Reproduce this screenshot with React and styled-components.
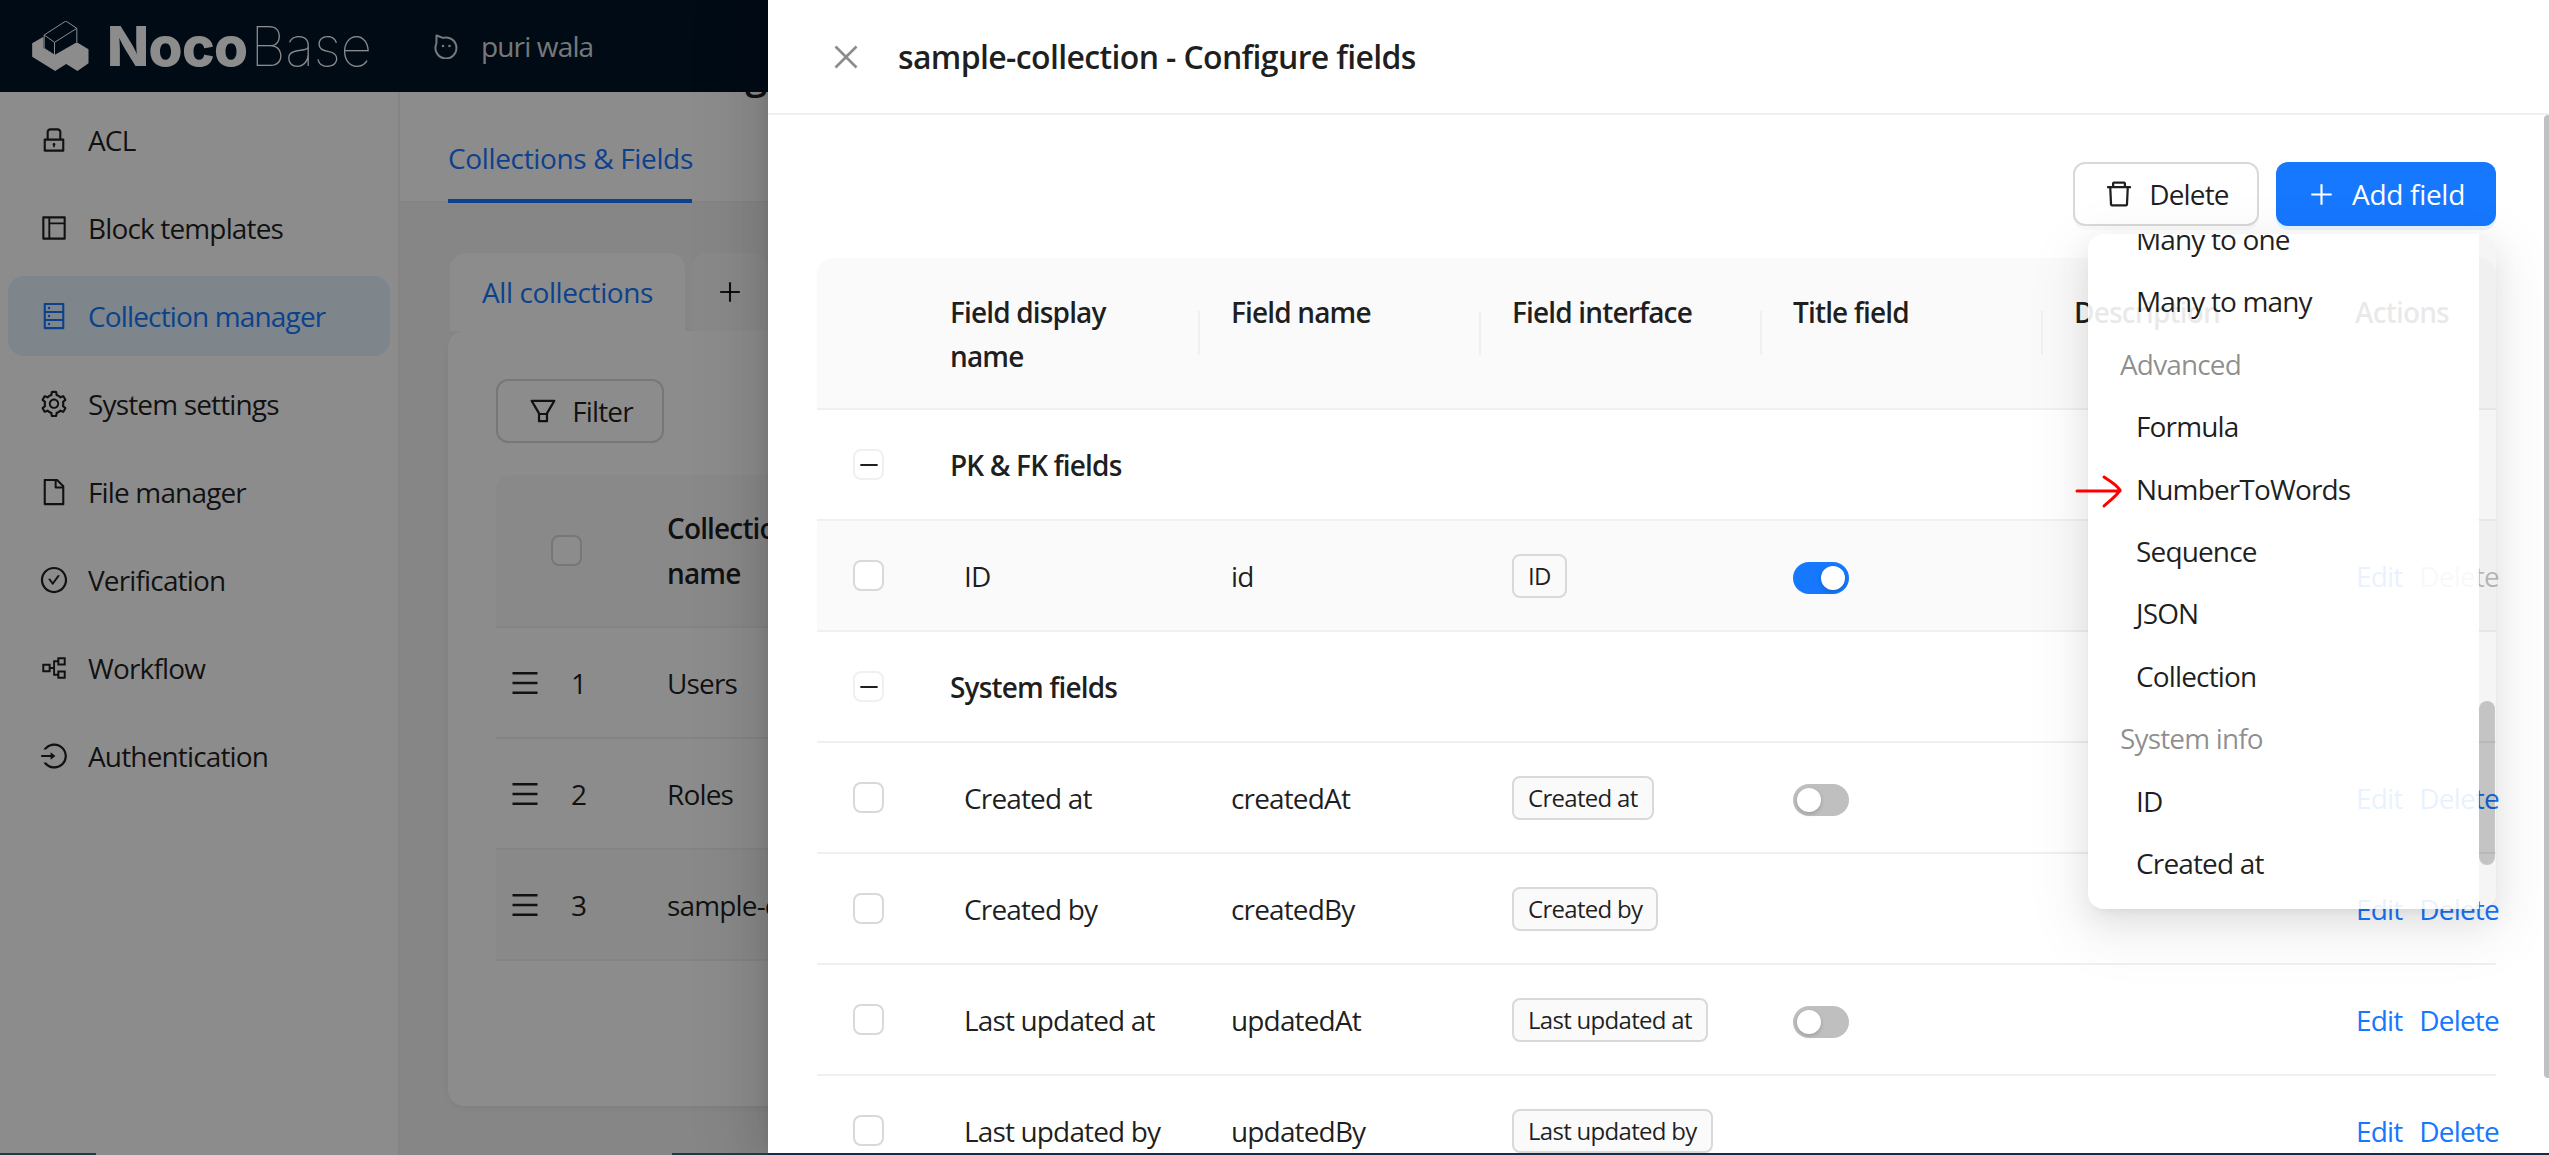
import styled, { createGlobalStyle } from "styled-components";
import {
  AiOutlineLock,
  AiOutlineLayout,
  AiOutlineDatabase,
  AiOutlineSetting,
  AiOutlineFile,
  AiOutlineCheckCircle,
  AiOutlinePartition,
  AiOutlineLogin,
  AiOutlineDelete,
  AiOutlinePlus,
  AiOutlineClose,
  AiOutlineFilter,
  AiOutlineMenu,
  AiOutlineMinus,
} from "react-icons/ai";

const GlobalStyle = createGlobalStyle`
  html, body {
    margin: 0;
    padding: 0;
    width: 2549px;
    height: 1155px;
    overflow: hidden;
    background: #fff;
  }
  * { box-sizing: border-box; }
`;

const Page = styled.div`
  position: relative;
  width: 2549px;
  height: 1155px;
  overflow: hidden;
  display: flex;
  flex-direction: column;
  font-family: "Open Sans", "Noto Sans", sans-serif;
  font-size: 28px;
  letter-spacing: -0.85px;
  color: rgba(0, 0, 0, 0.88);
  background: #f5f5f5;
`;

/* ---- app header ---- */

const Header = styled.header`
  flex: none;
  height: 92px;
  display: flex;
  align-items: center;
  padding-left: 32px;
  background: #001529;
  color: rgba(255, 255, 255, 0.85);
`;

const LogoMark = styled.svg`
  width: 57px;
  height: 50px;
  margin-right: 18px;
`;

const LogoText = styled.div`
  display: flex;
  align-items: baseline;
  font-family: Inter, "Liberation Sans", sans-serif;
  font-size: 55px;
  line-height: 1;
  color: #fff;
  width: 327px;
`;

const LogoBold = styled.span`
  font-weight: 800;
  letter-spacing: -0.6px;
  margin-right: 3px;
`;

const LogoThin = styled.span`
  font-weight: 100;
  letter-spacing: -0.4px;
`;

const AppName = styled.div`
  display: flex;
  align-items: center;
  gap: 23px;
`;

const AppIcon = styled.svg`
  width: 24px;
  height: 25px;
`;

/* ---- page behind the drawer ---- */

const Body = styled.div`
  flex: 1;
  min-height: 0;
  display: flex;
`;

const Sidebar = styled.nav`
  flex: none;
  width: 400px;
  padding: 8px 8px 0;
  background: #fff;
  border-right: 2px solid #f0f0f0;
`;

const MenuItem = styled.div`
  height: 80px;
  margin-bottom: 8px;
  padding-left: 31px;
  display: flex;
  align-items: center;
  gap: 19px;
  border-radius: 16px;
  background: ${(p) => (p.$active ? "#e6f4ff" : "transparent")};
  color: ${(p) => (p.$active ? "#1677ff" : "rgba(0, 0, 0, 0.88)")};

  svg {
    flex: none;
    font-size: 30px;
  }
`;

const Main = styled.main`
  flex: 1;
  min-width: 0;
`;

const PageHead = styled.div`
  height: 111px;
  padding-left: 48px;
  display: flex;
  flex-direction: column;
  justify-content: flex-end;
  overflow: hidden;
  background: #fff;
  box-shadow: inset 0 -2px 0 #f0f0f0;
`;

const PageTitle = styled.h1`
  flex: none;
  margin: 0 0 12px;
  font-size: 40px;
  line-height: 56px;
  font-weight: 600;
  letter-spacing: -1px;
  white-space: nowrap;
`;

const PageTab = styled.div`
  flex: none;
  align-self: flex-start;
  height: 90px;
  width: 244px;
  padding-top: 4px;
  display: flex;
  align-items: center;
  white-space: nowrap;
  letter-spacing: -0.35px;
  color: #1677ff;
  border-bottom: 4px solid #1677ff;
`;

const Content = styled.div`
  padding: 50px 50px 0 48px;
`;

const CardTabs = styled.div`
  display: flex;
  gap: 7px;
  height: 78px;
  padding-left: 2px;
`;

const CardTab = styled.div`
  display: flex;
  align-items: center;
  justify-content: center;
  width: ${(p) => (p.$add ? "76px" : "235px")};
  letter-spacing: -0.4px;
  border-radius: 16px 16px 0 0;
  background: ${(p) => (p.$add ? "#fafafa" : "#fff")};
  color: ${(p) => (p.$add ? "rgba(0, 0, 0, 0.88)" : "#1677ff")};
`;

const Card = styled.div`
  height: 775px;
  padding: 48px;
  background: #fff;
  border-radius: 16px;
  box-shadow: 0 2px 4px rgba(0, 0, 0, 0.03), 0 2px 12px rgba(0, 0, 0, 0.04);
`;

const FilterButton = styled.div`
  width: 168px;
  height: 64px;
  display: flex;
  align-items: center;
  justify-content: center;
  gap: 13px;
  background: #fff;
  border: 2px solid #d9d9d9;
  border-radius: 12px;

  svg {
    font-size: 32px;
  }
`;

const CollectionHead = styled.div`
  margin-top: 32px;
  height: 153px;
  display: flex;
  align-items: center;
  background: #fafafa;
  border-radius: 16px 16px 0 0;
  border-bottom: 2px solid #f0f0f0;
  font-weight: 600;
  line-height: 45px;
`;

const HeadCheckCell = styled.div`
  flex: none;
  width: 171px;
  padding-left: 55px;
`;

const HeadName = styled.div`
  white-space: nowrap;
`;

const CollectionRow = styled.div`
  height: 111px;
  display: flex;
  align-items: center;
  background: ${(p) => (p.$hover ? "#fafafa" : "#fff")};
  border-bottom: 2px solid #f0f0f0;
`;

const HandleCell = styled.div`
  flex: none;
  width: 171px;
  padding-left: 13px;
  display: flex;
  align-items: center;
  gap: 30px;

  svg {
    font-size: 32px;
  }
`;

/* ---- overlay ---- */

const Mask = styled.div`
  position: absolute;
  inset: 0;
  background: rgba(0, 0, 0, 0.45);
`;

const Drawer = styled.aside`
  position: absolute;
  top: 0;
  right: 0;
  bottom: 0;
  width: 1781px;
  display: flex;
  flex-direction: column;
  background: #fff;
  box-shadow: -12px 0 32px 0 rgba(0, 0, 0, 0.08), -6px 0 12px -8px rgba(0, 0, 0, 0.12),
    -18px 0 56px 16px rgba(0, 0, 0, 0.05);
`;

const DrawerHead = styled.div`
  flex: none;
  height: 115px;
  display: flex;
  align-items: center;
  gap: 35px;
  padding-left: 61px;
  border-bottom: 2px solid #f0f0f0;

  svg {
    font-size: 34px;
    color: rgba(0, 0, 0, 0.45);
  }
`;

const DrawerTitle = styled.div`
  font-size: 32px;
  font-weight: 600;
  letter-spacing: -0.64px;
`;

const DrawerBody = styled.div`
  flex: 1;
  min-height: 0;
  overflow: hidden;
  padding: 47px 53px 0 49px;
`;

const Actions = styled.div`
  display: flex;
  justify-content: flex-end;
  gap: 17px;
  margin-bottom: 32px;
`;

const Button = styled.div`
  height: 64px;
  width: ${(p) => p.$width}px;
  display: flex;
  align-items: center;
  justify-content: center;
  gap: ${(p) => (p.$primary ? 16 : 14)}px;
  border-radius: 12px;
  letter-spacing: ${(p) => (p.$primary ? "-0.3px" : "-0.85px")};
  background: ${(p) => (p.$primary ? "#1677ff" : "#fff")};
  color: ${(p) => (p.$primary ? "#fff" : "rgba(0, 0, 0, 0.88)")};
  border: ${(p) => (p.$primary ? "none" : "2px solid #d9d9d9")};
  box-shadow: ${(p) =>
    p.$primary ? "0 4px 0 rgba(5, 145, 255, 0.1)" : "0 4px 0 rgba(0, 0, 0, 0.02)"};

  svg {
    font-size: ${(p) => (p.$primary ? 29 : 32)}px;
  }
`;

const Row = styled.div`
  display: grid;
  grid-template-columns: 102px repeat(5, 281px) 1fr;
  align-items: center;
  height: ${(p) => p.$height || 111}px;
  background: ${(p) => (p.$shaded ? "#fafafa" : "#fff")};
  border-bottom: 2px solid #f0f0f0;
`;

const HeadRow = styled(Row)`
  height: 152px;
  background: #fafafa;
  border-radius: 16px 16px 0 0;
  font-weight: 600;
  line-height: 44px;
`;

const HeadCell = styled.div`
  position: relative;
  padding: 0 31px;

  &:not(:last-child)::after {
    content: "";
    position: absolute;
    top: 50%;
    right: 0;
    width: 2px;
    height: 44px;
    margin-top: -22px;
    background: #f0f0f0;
  }
`;

const HeadText = styled.div`
  height: 88px;
  padding-top: 1px;
`;

const Cell = styled.div`
  padding: 0 31px;
  white-space: nowrap;
`;

const TextCell = styled(Cell)`
  padding-left: ${(p) => (p.$indent ? 45 : 31)}px;
`;

const GroupTitle = styled(Cell)`
  grid-column: 2 / -1;
  font-weight: 600;
`;

const CheckCell = styled.div`
  padding-left: 36px;
`;

const Checkbox = styled.div`
  width: 31px;
  height: 31px;
  display: flex;
  align-items: center;
  justify-content: center;
  background: #fff;
  border: 2px solid ${(p) => (p.$light ? "#f0f0f0" : "#d9d9d9")};
  border-radius: 8px;
  color: rgba(0, 0, 0, 0.88);

  svg {
    font-size: 24px;
  }
`;

const Tag = styled.span`
  display: inline-block;
  height: 44px;
  line-height: 40px;
  padding: 0 14px;
  font-size: 24px;
  letter-spacing: -0.7px;
  background: #fafafa;
  border: 2px solid #d9d9d9;
  border-radius: 8px;
`;

const Switch = styled.div`
  width: 56px;
  height: 32px;
  margin-top: 4px;
  padding: 4px;
  display: flex;
  justify-content: ${(p) => (p.$on ? "flex-end" : "flex-start")};
  border-radius: 16px;
  background: ${(p) => (p.$on ? "#1677ff" : "#bfbfbf")};

  &::after {
    content: "";
    width: 24px;
    height: 24px;
    border-radius: 50%;
    background: #fff;
    box-shadow: 0 2px 4px rgba(0, 35, 11, 0.2);
  }
`;

const RowActions = styled.div`
  padding-left: 32px;
  display: flex;
  gap: 17px;
  white-space: nowrap;
`;

const ActionLink = styled.span`
  color: ${(p) => (p.$disabled ? "rgba(0, 0, 0, 0.25)" : "#1677ff")};
`;

/* ---- field type dropdown, open and scrolled ---- */

const Dropdown = styled.div`
  position: absolute;
  left: 1320px;
  top: 234px;
  width: 408px;
  height: 675px;
  display: flex;
  overflow: hidden;
  border-radius: 16px;
  box-shadow: 0 12px 32px 0 rgba(0, 0, 0, 0.08), 0 6px 12px -8px rgba(0, 0, 0, 0.12),
    0 18px 56px 16px rgba(0, 0, 0, 0.05);
`;

const DropdownList = styled.div`
  flex: 1;
  overflow: hidden;
  background: rgba(255, 255, 255, 0.9);
`;

const DropdownScroller = styled.div`
  margin-top: -26px;
`;

const DropdownGroup = styled.div`
  height: 62.4px;
  line-height: 62.4px;
  padding-left: 32px;
  color: rgba(0, 0, 0, 0.45);
`;

const DropdownItem = styled.div`
  height: 62.4px;
  line-height: 62.4px;
  padding-left: 48px;
`;

const DropdownGutter = styled.div`
  flex: none;
  width: 17px;
  padding-top: 467px;
  background: rgba(0, 0, 0, 0.04);
`;

const DropdownThumb = styled.div`
  width: 16px;
  height: 164px;
  border-radius: 8px;
  background: rgba(0, 0, 0, 0.2);
`;

const DrawerScrollbar = styled.div`
  position: absolute;
  top: 115px;
  right: 0;
  width: 5px;
  height: 963px;
  border-radius: 4px 0 0 4px;
  background: #c1c1c1;
`;

const RedArrow = styled.svg`
  position: absolute;
  left: 1307px;
  top: 473px;
  width: 48px;
  height: 36px;
`;

const BottomEdge = styled.div`
  position: absolute;
  left: 0;
  right: 0;
  bottom: 0;
  height: 2px;
  background: linear-gradient(
    to right,
    #1c3b47 0,
    #1c3b47 96px,
    transparent 96px,
    transparent 672px,
    #1c3b47 672px,
    #1c3b47 768px,
    #1a2b45 768px
  );
`;

const menu = [
  { label: "ACL", Icon: AiOutlineLock },
  { label: "Block templates", Icon: AiOutlineLayout },
  { label: "Collection manager", Icon: AiOutlineDatabase, active: true },
  { label: "System settings", Icon: AiOutlineSetting },
  { label: "File manager", Icon: AiOutlineFile },
  { label: "Verification", Icon: AiOutlineCheckCircle },
  { label: "Workflow", Icon: AiOutlinePartition },
  { label: "Authentication", Icon: AiOutlineLogin },
];

const collections = [
  { no: 1, name: "Users" },
  { no: 2, name: "Roles" },
  { no: 3, name: "sample-collection", hover: true },
];

const headers = ["Field name", "Field interface", "Title field", "Description", "Actions"];

const systemFields = [
  { title: "Created at", name: "createdAt", toggle: true },
  { title: "Created by", name: "createdBy" },
  { title: "Last updated at", name: "updatedAt", toggle: true },
  { title: "Last updated by", name: "updatedBy" },
];

const fieldTypes = [
  { label: "Many to one" },
  { label: "Many to many" },
  { label: "Advanced", group: true },
  { label: "Formula" },
  { label: "NumberToWords" },
  { label: "Sequence" },
  { label: "JSON" },
  { label: "Collection" },
  { label: "System info", group: true },
  { label: "ID" },
  { label: "Created at" },
];

const FieldRow = ({ title, name, toggle, on, shaded, disabled }) => (
  <Row $shaded={shaded}>
    <CheckCell>
      <Checkbox />
    </CheckCell>
    <TextCell $indent>{title}</TextCell>
    <Cell>{name}</Cell>
    <Cell>
      <Tag>{title}</Tag>
    </Cell>
    <Cell>{toggle && <Switch $on={on} />}</Cell>
    <Cell />
    <RowActions>
      <ActionLink>Edit</ActionLink>
      <ActionLink $disabled={disabled}>Delete</ActionLink>
    </RowActions>
  </Row>
);

const GroupRow = ({ title }) => (
  <Row>
    <CheckCell>
      <Checkbox $light>
        <AiOutlineMinus />
      </Checkbox>
    </CheckCell>
    <GroupTitle>{title}</GroupTitle>
  </Row>
);

export default function App() {
  return (
    <Page>
      <GlobalStyle />
      <Header>
        <LogoMark viewBox="36 33 170 150">
          <path
            fill="#fff"
            d="M36 100 L70 80 V115 L103 135 L170 97 L205 118 V160 L172 183 L138 162 L105 183 L36 140 Z"
          />
          <path
            fill="none"
            stroke="#fff"
            strokeWidth="3"
            d="M72 75 L137 33 L170 55 L103 97 Z M72 75 V115 L103 135 V97 M170 55 V97"
          />
        </LogoMark>
        <LogoText>
          <LogoBold>Noco</LogoBold>
          <LogoThin>Base</LogoThin>
        </LogoText>
        <AppName>
          <AppIcon viewBox="0 0 24 25" fill="none" stroke="currentColor" strokeWidth="2">
            <path d="M2.5 1.5 L9 3.9 A10.5 10.5 0 1 1 2.4 9.6 Z" strokeLinejoin="round" />
            <circle cx="9" cy="12" r="1.3" fill="currentColor" stroke="none" />
            <circle cx="15.5" cy="12" r="1.3" fill="currentColor" stroke="none" />
          </AppIcon>
          <span>puri wala</span>
        </AppName>
      </Header>

      <Body>
        <Sidebar>
          {menu.map(({ label, Icon, active }) => (
            <MenuItem key={label} $active={active}>
              <Icon />
              <span>{label}</span>
            </MenuItem>
          ))}
        </Sidebar>
        <Main>
          <PageHead>
            <PageTitle>Collection manager</PageTitle>
            <PageTab>Collections &amp; Fields</PageTab>
          </PageHead>
          <Content>
            <CardTabs>
              <CardTab>All collections</CardTab>
              <CardTab $add>
                <AiOutlinePlus />
              </CardTab>
            </CardTabs>
            <Card>
              <FilterButton>
                <AiOutlineFilter />
                <span>Filter</span>
              </FilterButton>
              <CollectionHead>
                <HeadCheckCell>
                  <Checkbox />
                </HeadCheckCell>
                <HeadName>
                  Collection display
                  <br />
                  name
                </HeadName>
              </CollectionHead>
              {collections.map((c) => (
                <CollectionRow key={c.no} $hover={c.hover}>
                  <HandleCell>
                    <AiOutlineMenu />
                    <span>{c.no}</span>
                  </HandleCell>
                  <span>{c.name}</span>
                </CollectionRow>
              ))}
            </Card>
          </Content>
        </Main>
      </Body>

      <Mask />

      <Drawer>
        <DrawerHead>
          <AiOutlineClose />
          <DrawerTitle>sample-collection - Configure fields</DrawerTitle>
        </DrawerHead>
        <DrawerBody>
          <Actions>
            <Button $width={186}>
              <AiOutlineDelete />
              <span>Delete</span>
            </Button>
            <Button $width={220} $primary>
              <AiOutlinePlus />
              <span>Add field</span>
            </Button>
          </Actions>
          <HeadRow>
            <div />
            <HeadCell>
              <HeadText>
                Field display
                <br />
                name
              </HeadText>
            </HeadCell>
            {headers.map((h) => (
              <HeadCell key={h}>
                <HeadText>{h}</HeadText>
              </HeadCell>
            ))}
          </HeadRow>
          <GroupRow title="PK & FK fields" />
          <FieldRow title="ID" name="id" toggle on shaded disabled />
          <GroupRow title="System fields" />
          {systemFields.map((f) => (
            <FieldRow key={f.name} {...f} />
          ))}
        </DrawerBody>

        <Dropdown>
          <DropdownList>
            <DropdownScroller>
              {fieldTypes.map((t) =>
                t.group ? (
                  <DropdownGroup key={t.label}>{t.label}</DropdownGroup>
                ) : (
                  <DropdownItem key={t.label}>{t.label}</DropdownItem>
                )
              )}
            </DropdownScroller>
          </DropdownList>
          <DropdownGutter>
            <DropdownThumb />
          </DropdownGutter>
        </Dropdown>

        <RedArrow viewBox="0 0 48 36" fill="none" stroke="#f00" strokeWidth="3" strokeLinecap="round">
          <path d="M2 18 H45 M29 4 C33 7 40 10 45 17 C41 24 35 27 29 33" />
        </RedArrow>
        <DrawerScrollbar />
      </Drawer>
      <BottomEdge />
    </Page>
  );
}
